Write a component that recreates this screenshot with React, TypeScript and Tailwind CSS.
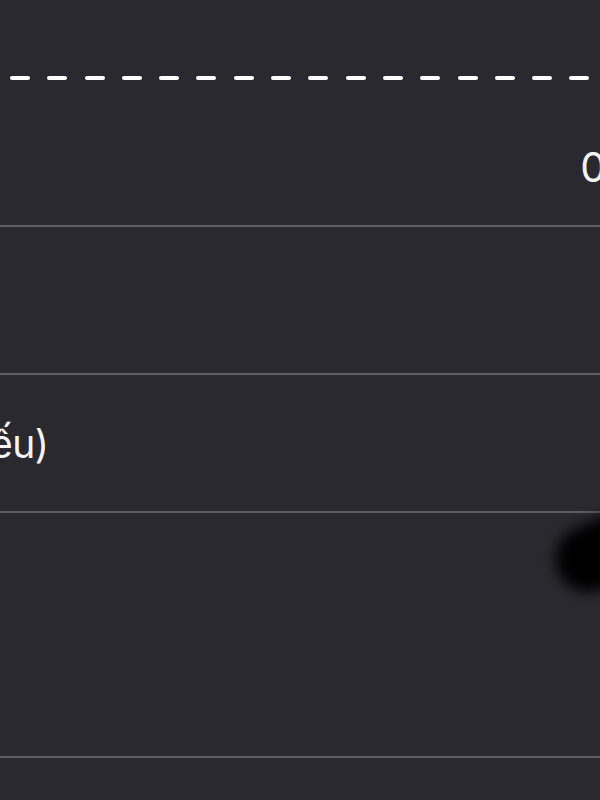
export default function App() {
  const dashes = Array.from({ length: 16 });
  return (
    <div
      className="relative h-[800px] w-[600px] overflow-hidden bg-[#2a292f] text-[#f4f4f5]"
      style={{ fontFamily: 'Inter, "Noto Sans", sans-serif' }}
    >
      {/* dashed divider */}
      <div className="flex gap-[17.3px] pl-[10px] pt-[76px]">
        {dashes.map((_, i) => (
          <div key={i} className="h-[4px] w-[20px] shrink-0 rounded-full bg-white" />
        ))}
      </div>

      {/* row with value */}
      <div className="flex h-[145px] items-center justify-end pt-[30px]">
        <span className="-mr-[6px] text-[41px] leading-none">0</span>
      </div>
      <div className="h-[2px] bg-[#5e5d64]" />

      {/* empty row */}
      <div className="h-[146px]" />
      <div className="h-[2px] bg-[#5e5d64]" />

      {/* label row */}
      <div className="flex h-[136px] items-center">
        <span className="-ml-[10px] text-[39px] leading-none tracking-[-0.5px]">ếu)</span>
      </div>
      <div className="h-[2px] bg-[#5e5d64]" />

      {/* tall row */}
      <div className="relative h-[243px]">
        <div className="absolute left-[553px] top-[2px] h-[66px] w-[120px] -rotate-[24deg] rounded-full bg-black blur-[7px]" />
      </div>
      <div className="h-[2px] bg-[#5e5d64]" />
    </div>
  );
}
